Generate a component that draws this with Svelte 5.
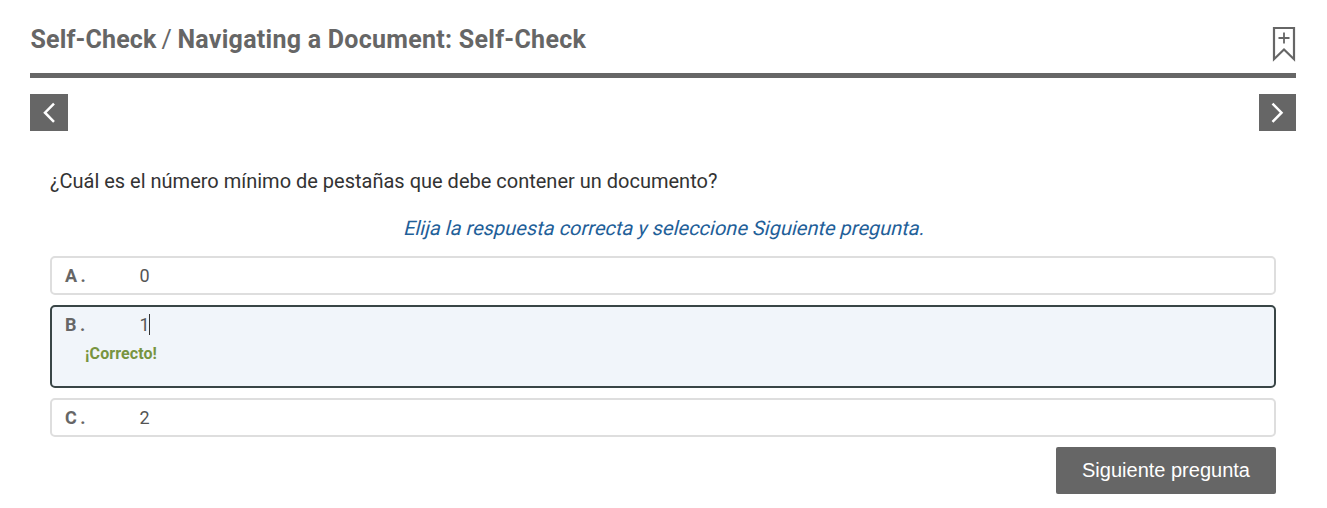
<script>
  const options = [
    { letter: 'A', text: '0' },
    { letter: 'B', text: '1', selected: true, feedback: '¡Correcto!' },
    { letter: 'C', text: '2' }
  ];
</script>

<main>
  <header>
    <h1><span class="section">Self-Check</span><span class="slash">/</span><span class="topic">Navigating a Document: Self-Check</span></h1>
    <svg class="bookmark" width="24" height="36" viewBox="0 0 24 36" aria-hidden="true">
      <path d="M2 2H22V33.2L12 23.5L2 33.2Z" fill="none" stroke="#666" stroke-width="2.2" />
      <path d="M6.5 12H17.5M12 6.5V17.5" fill="none" stroke="#666" stroke-width="1.8" />
    </svg>
  </header>
  <nav>
    <button class="step prev" aria-label="Anterior">
      <svg width="38" height="37" viewBox="0 0 38 37"><path d="M24 9.6L15 18.7L24 27.8" /></svg>
    </button>
    <button class="step next" aria-label="Siguiente">
      <svg width="37" height="37" viewBox="0 0 37 37"><path d="M13.5 9.6L22.5 18.7L13.5 27.8" /></svg>
    </button>
  </nav>
  <section>
    <p class="question">¿Cuál es el número mínimo de pestañas que debe contener un documento?</p>
    <p class="hint"><span>Elija la respuesta correcta y seleccione Siguiente pregunta.</span></p>
    <div class="options">
      {#each options as option}
        <div class="option" class:selected={option.selected}>
          <div class="line">
            <span class="letter">{option.letter}<span class="dot">.</span></span>
            <span class="answer">{option.text}</span>
            {#if option.selected}<i class="caret"></i>{/if}
          </div>
          {#if option.feedback}<div class="feedback">{option.feedback}</div>{/if}
        </div>
      {/each}
    </div>
    <div class="actions"><button class="submit">Siguiente pregunta</button></div>
  </section>
</main>

<style>
  :global(body) { margin: 0; background: #fff; }
  main {
    box-sizing: border-box;
    height: 508px;
    padding: 0 31px 0 30px;
    overflow: hidden;
    font-family: Roboto, sans-serif;
    color: #333;
  }
  header {
    box-sizing: border-box;
    display: flex;
    justify-content: space-between;
    height: 78px;
    border-bottom: 5px solid #666;
  }
  h1 {
    display: flex;
    margin: 24px 0 0;
    font-size: 25px;
    line-height: 32px;
    font-weight: 700;
    color: #666;
    white-space: pre;
  }
  .section { letter-spacing: 0.15px; margin-left: 0.5px; }
  .topic { letter-spacing: 0.27px; }
  .slash { font-weight: 400; margin: 0 5.5px 0 5px; }
  .bookmark { margin: 26px 0 0; }
  nav { display: flex; justify-content: space-between; margin-top: 16px; }
  .step {
    display: flex;
    height: 37px;
    padding: 0;
    border: 0;
    background: #666;
  }
  .prev { width: 38px; }
  .next { width: 37px; }
  .step path { fill: none; stroke: #fff; stroke-width: 2.5; }
  section { padding: 37px 20px 0; }
  p { margin: 0; font-size: 20px; line-height: 26px; }
  .hint { margin-top: 21px; text-align: center; color: #1f6099; }
  .hint span { display: inline-block; transform: skewX(-14deg); transform-origin: 50% 75%; }
  .options { display: flex; flex-direction: column; gap: 10px; margin-top: 15px; }
  .option {
    box-sizing: border-box;
    height: 39px;
    padding: 7px 13px;
    border: 2px solid #dedede;
    border-radius: 5px;
    color: #555;
  }
  .selected { height: 83px; border-color: #394546; background: #f1f5fa; }
  .line { display: flex; height: 21px; font-size: 18px; line-height: 21px; }
  .letter { display: flex; width: 74.5px; font-weight: 700; color: #666; }
  .dot { margin-left: 3.4px; }
  .caret { width: 1px; height: 21px; background: #333; margin-left: -0.5px; }
  .feedback {
    margin: 9px 0 0 20px;
    font-size: 16px;
    line-height: 20px;
    font-weight: 700;
    letter-spacing: 0.08px;
    color: #789440;
  }
  .actions { display: flex; justify-content: flex-end; margin-top: 10px; }
  .submit {
    width: 220px;
    height: 47px;
    padding: 0 0 1px;
    border: 0;
    border-radius: 2px;
    background: #666;
    color: #fff;
    font: 20px/46px "Liberation Sans", Arial, sans-serif;
  }
</style>
